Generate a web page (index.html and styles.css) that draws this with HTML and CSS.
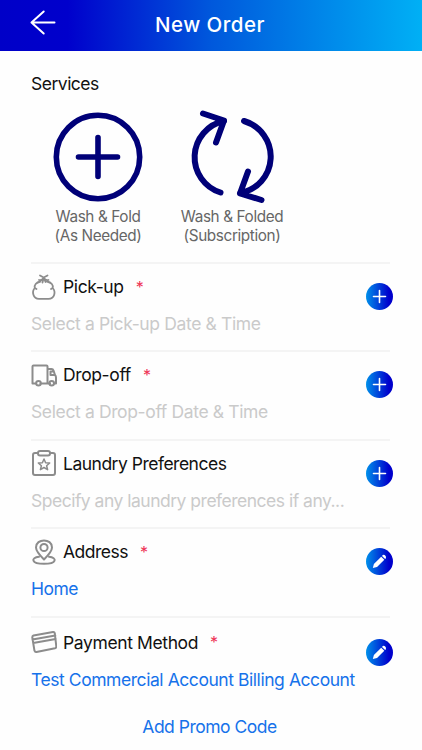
FILE: index.html
```html
<!DOCTYPE html>
<html lang="en">
  <head>
    <meta charset="utf-8">
    <meta name="viewport" content="width=device-width, initial-scale=1">
    <title>New Order</title>
    <link rel="stylesheet" href="styles.css">
  </head>
  <body>
    <header class="topbar">
      <a class="back" href="#" aria-label="Back">
        <svg width="26" height="26" viewBox="0 0 26 26"><path d="M24.500 12.500H1.500M13.700 1.500L1.500 12.500L13.700 23.500"/></svg>
      </a>
      <h1>New Order</h1>
    </header>

    <main>
      <h2 class="heading">Services</h2>
      <div class="services">
        <div class="service">
          <svg width="90" height="90" viewBox="0 0 90 90">
            <circle cx="45" cy="45" r="41.7"/>
            <path d="M45 25.500V64.500M25.500 45H64.500"/>
          </svg>
          <p>Wash &amp; Fold<br>(As Needed)</p>
        </div>
        <div class="service folded">
          <svg width="90" height="90" viewBox="0 0 90 90">
            <path d="M33.500 80.500A37 37 0 0 1 37 9M16 1.500L37 8.500L29 30.500"/>
            <path d="M57 9A37 37 0 0 1 53 81M61 59.500L53 81.500L74.500 88"/>
          </svg>
          <p>Wash &amp; Folded<br>(Subscription)</p>
        </div>
      </div>

      <section class="row">
        <div class="info">
          <h3 class="pickup">
            <svg class="icon" viewBox="0 0 26 26">
              <path d="M9.500 7.500C5 8.500 3 11 3.800 14C0.500 17.500 2 24.800 8 24.800H17.500C23.800 24.800 25 17.500 21.700 14C22.500 11 20.500 8.500 16 7.500M3.800 14L5.500 15M21.700 14L20 15M8 6C9.500 6.500 11.500 6 12.700 3.500C14 6 16 6.500 17.500 6M9 1.500L12.700 3.500L16.500 1.500M12.700 3.500L11.500 8.500M12.700 3.500L14.500 8"/>
            </svg>
            <span class="name">Pick-up</span><span class="required">*</span>
          </h3>
          <p class="hint pick-hint">Select a Pick-up Date &amp; Time</p>
        </div>
        <button class="action" aria-label="Add pick-up"><svg viewBox="0 0 27 27"><path d="M13.500 7.500V19.500M7.500 13.500H19.500"/></svg></button>
      </section>

      <section class="row">
        <div class="info">
          <h3 class="dropoff">
            <svg class="icon" viewBox="0 0 26 26">
              <path d="M5 21.500H1.500V4.500Q1.500 3.500 2.500 3.500H15.500Q16.500 3.500 16.500 4.500V21.500H9.500M16.500 7H20.500Q22 7 22.500 8.500L24 13Q25 14 25 15.500V21.500H23.500M19 21.500H16.500M24 13H19.500V9.500H22.500"/>
              <circle cx="7.500" cy="21.200" r="2.300"/><circle cx="20.700" cy="21.200" r="2.300"/>
            </svg>
            <span class="name">Drop-off</span><span class="required">*</span>
          </h3>
          <p class="hint pick-hint">Select a Drop-off Date &amp; Time</p>
        </div>
        <button class="action" aria-label="Add drop-off"><svg viewBox="0 0 27 27"><path d="M13.500 7.500V19.500M7.500 13.500H19.500"/></svg></button>
      </section>

      <section class="row">
        <div class="info">
          <h3 class="laundry">
            <svg class="icon" viewBox="0 0 26 26">
              <path d="M7 3H4Q2 3 2 5V23Q2 25 4 25H22Q24 25 24 23V5Q24 3 22 3H19"/>
              <rect x="7" y="1" width="12" height="4.500" rx="2"/>
              <path class="thin" d="M13 9L14.600 12.700L18.700 13L15.600 15.700L16.600 19.700L13 17.500L9.400 19.700L10.400 15.700L7.300 13L11.400 12.700Z"/>
            </svg>
            <span class="name">Laundry Preferences</span>
          </h3>
          <p class="hint">Specify any laundry preferences if any...</p>
        </div>
        <button class="action" aria-label="Add preferences"><svg viewBox="0 0 27 27"><path d="M13.500 7.500V19.500M7.500 13.500H19.500"/></svg></button>
      </section>

      <section class="row">
        <div class="info">
          <h3 class="address">
            <svg class="icon" viewBox="0 0 26 26">
              <path d="M13 20.500C9 16.500 5 12.500 5 8.500C5 -1 21 -1 21 8.500C21 12.500 17 16.500 13 20.500Z"/>
              <circle cx="13" cy="8.500" r="3.600"/>
              <path d="M8 17.800C-0.500 18.500 0 24.800 13 24.800S26.500 18.500 18 17.800"/>
            </svg>
            <span class="name">Address</span><span class="required">*</span>
          </h3>
          <p class="link">Home</p>
        </div>
        <button class="action" aria-label="Edit address"><svg viewBox="0 0 27 27"><path class="pencil" d="M6.800 20L7.900 16L15.200 8.700L18.300 11.800L11 19ZM16 7.900L16.800 7.100Q18 6.300 19.200 7.500T19.900 10.200L19.100 11Z"/></svg></button>
      </section>

      <section class="row payment-row">
        <div class="info">
          <h3 class="payment">
            <svg class="icon" viewBox="0 0 26 26">
              <path d="M2.500 6.500L22 3Q23.500 2.800 23.800 4.300L25.300 17.500Q25.300 19 24 19.300L5.500 23Q4 23.300 3.500 21.800L1.300 8.500Q1.200 7 2.500 6.500ZM1.500 10.500L24.300 6.500M2.200 14L24.700 10"/>
            </svg>
            <span class="name">Payment Method</span><span class="required">*</span>
          </h3>
          <p class="link">Test Commercial Account Billing Account</p>
        </div>
        <button class="action" aria-label="Edit payment method"><svg viewBox="0 0 27 27"><path class="pencil" d="M6.800 20L7.900 16L15.200 8.700L18.300 11.800L11 19ZM16 7.900L16.800 7.100Q18 6.300 19.200 7.500T19.900 10.200L19.100 11Z"/></svg></button>
      </section>

      <a class="promo" href="#">Add Promo Code</a>
    </main>
  </body>
</html>
```
FILE: styles.css
```css
* {
  box-sizing: border-box;
}

body {
  margin: 0;
  background: #fefefe;
  color: #111;
  font-family: Inter, "Liberation Sans", sans-serif;
  font-size: 17.5px;
  letter-spacing: -0.5px;
}

h1, h2, h3, p {
  margin: 0;
  font-weight: 400;
}

svg {
  fill: none;
  stroke-linecap: round;
  stroke-linejoin: round;
}

.topbar {
  display: grid;
  grid-template-columns: 60px 1fr 62px;
  height: 51px;
  background: linear-gradient(90deg, #0000c8 0%, #0000cc 16%, #0058dc 50%, #00b0f5 100%);
  color: #fff;
}

.topbar h1 {
  font-size: 20.5px;
  font-weight: 500;
  letter-spacing: 0.5px;
  line-height: 49px;
  text-align: center;
}

.back {
  padding: 10px 0 0 30px;
}

.back svg {
  stroke: #fff;
  stroke-width: 2;
}

main {
  padding: 20px 32px 0 31px;
}

.heading {
  font-size: 17.5px;
  line-height: 25px;
}

.services {
  display: flex;
  gap: 10px;
  height: 166px;
  padding: 16px 0 0 5px;
}

.service {
  width: 124px;
  text-align: center;
  color: #666;
  font-size: 15.3px;
  line-height: 19px;
  letter-spacing: -0.38px;
}

.service svg {
  display: block;
  margin: 0 auto 5px;
  overflow: visible;
  stroke: #000078;
  stroke-width: 5.6;
}

.folded svg {
  stroke-width: 6;
}

.row {
  display: flex;
  justify-content: space-between;
  height: 88.4px;
  border-top: 2px solid #f4f4f4;
}

.info {
  padding-top: 7px;
  white-space: nowrap;
}

.row h3 {
  display: flex;
  align-items: center;
  height: 31px;
  font-size: 17.5px;
}

.icon {
  width: 26px;
  height: 26px;
  margin-right: 6px;
  stroke: #8c8c8c;
  stroke-width: 2;
}

.icon .thin {
  stroke-width: 1.5;
}

.pickup .icon {
  stroke-width: 1.8;
}

.pickup, .dropoff, .payment {
  letter-spacing: -0.38px;
}

.required {
  margin-left: 12px;
  color: #ee3355;
  font-size: 16px;
}

.hint, .link {
  margin-top: 10px;
  line-height: 24px;
}

.hint {
  color: #cacaca;
}

.pick-hint {
  letter-spacing: -0.37px;
}

.link, .promo {
  color: #1672ea;
}

.payment-row .link {
  letter-spacing: -0.44px;
}

.action {
  width: 27px;
  height: 27px;
  margin: 19px -3px 0 0;
  padding: 0;
  border: 0;
  border-radius: 50%;
  background: linear-gradient(90deg, #0090ea, #0000cc 85%);
}

.action svg {
  display: block;
  stroke: #fff;
  stroke-width: 1.6;
}

.action .pencil {
  fill: #fff;
  stroke: none;
}

.payment-row .info {
  padding-top: 9px;
}

.payment-row .action {
  margin-top: 21px;
}

.promo {
  display: block;
  margin: 11px 2px 0 0;
  line-height: 24px;
  text-align: center;
  text-decoration: none;
}
```
